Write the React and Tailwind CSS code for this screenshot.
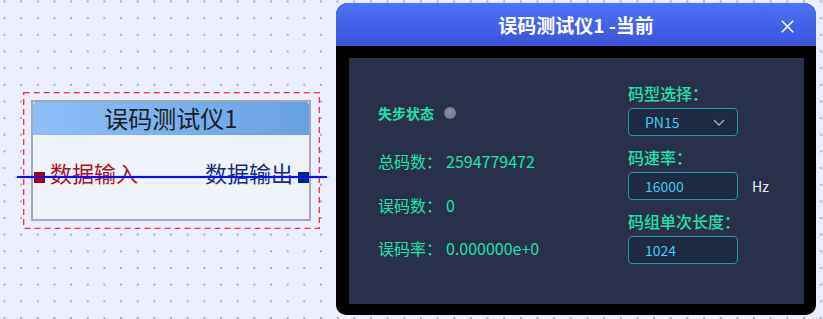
import React from 'react';

const FONT = { fontFamily: '"Noto Sans CJK SC", "Noto Sans", sans-serif' };

function Field({ children }) {
  return (
    <div className="w-[110px] h-[28px] mt-[5px] flex items-center pl-[16px] pr-[12px] rounded-[4px] border border-[#1b98a9] bg-[#1f2940] text-[14px] text-[#37cff0]">
      {children}
    </div>
  );
}

function BlockNode() {
  return (
    <div className="absolute left-[23px] top-[92px] w-[297px] h-[137px] p-[8px]">
      <svg className="absolute inset-0" width="297" height="137">
        <rect x="0.7" y="0.7" width="295.6" height="135.6" fill="none" stroke="#f0303f" strokeWidth="1.3" strokeDasharray="6 4" />
      </svg>
      <div className="relative w-[280px] h-[121px] border-2 border-[#a3a9b5] bg-[#eef3f9] flex flex-col">
        <div className="h-[33px] pb-[2px] rounded-t-[3px] bg-gradient-to-r from-[#8cbffa] to-[#68a1e3] flex items-center justify-center text-[24px] text-[#1e1e22] leading-none">
          误码测试仪1
        </div>
        <div className="flex-1 flex items-center justify-between pl-[1px]">
          <div className="flex items-center">
            <div className="w-[11px] h-[11px] bg-[#a3000f]" />
            <div className="ml-[5px] pb-[10px] text-[22px] leading-none text-[#ad1422]">数据输入</div>
          </div>
          <div className="flex items-center">
            <div className="pb-[10px] text-[22px] leading-none text-[#1c2b7d]">数据输出</div>
            <div className="ml-[5px] w-[11px] h-[11px] bg-[#00208c]" />
          </div>
        </div>
      </div>
      <svg className="absolute left-[-9px] top-[81px]" width="316" height="8">
        <path d="M0 4 L6 2.8 L310 2.8 L316 4 L310 5.2 L6 5.2 Z" fill="#6b6bff" opacity="0.6" />
        <line x1="3" y1="4" x2="313" y2="4" stroke="#0a0aff" strokeWidth="2" />
      </svg>
    </div>
  );
}

function Dialog() {
  return (
    <div className="absolute left-[336px] top-[3px] w-[480px] h-[312px] rounded-t-[12px] rounded-b-[10px] overflow-hidden bg-black flex flex-col">
      <div className="relative h-[43px] bg-gradient-to-b from-[#4b73fb] to-[#3954d8] flex items-center justify-center">
        <div className="text-white font-bold text-[19px] leading-none">误码测试仪1 -当前</div>
        <svg className="absolute right-[22px] top-[17px]" width="13" height="13" viewBox="0 0 13 13">
          <path d="M0.8 0.8 L12.2 12.2 M12.2 0.8 L0.8 12.2" stroke="#fff" strokeWidth="1.6" />
        </svg>
      </div>
      <div className="flex-1 pl-[13px] pr-[12px] pt-[12px] pb-[11px]">
        <div className="h-full bg-[#283149] flex">
          <div className="w-[279px] pl-[29px] flex flex-col text-[#1fe3a6]">
            <div className="mt-[43px] h-[24px] flex items-center">
              <span className="text-[14px] font-bold">失步状态</span>
              <div className="ml-[10px] w-[12px] h-[12px] rounded-full bg-[radial-gradient(circle_at_45%_40%,#9195a2,#676b7b)]" />
            </div>
            <div className="mt-[24px] h-[24px] flex items-center text-[16px]">
              <span>总码数：</span>
              <span className="ml-[4px]">2594779472</span>
            </div>
            <div className="mt-[20px] h-[24px] flex items-center text-[16px]">
              <span>误码数：</span>
              <span className="ml-[4px]">0</span>
            </div>
            <div className="mt-[19px] h-[24px] flex items-center text-[16px]">
              <span>误码率：</span>
              <span className="ml-[4px]">0.000000e+0</span>
            </div>
          </div>
          <div className="flex flex-col text-[16px] text-[#1fe3a6] font-medium">
            <div className="mt-[25px] h-[20px] flex items-center">码型选择：</div>
            <Field>
              <span className="flex-1 font-normal">PN15</span>
              <svg width="12" height="7" viewBox="0 0 12 7">
                <polyline points="1,1 6,6 11,1" fill="none" stroke="#a9b0bf" strokeWidth="1.3" />
              </svg>
            </Field>
            <div className="mt-[11px] h-[20px] flex items-center">码速率：</div>
            <div className="flex items-center">
              <Field><span className="font-normal">16000</span></Field>
              <span className="ml-[14px] mt-[5px] text-[14px] text-[#eceef4] font-normal">Hz</span>
            </div>
            <div className="mt-[11px] h-[20px] flex items-center">码组单次长度：</div>
            <Field><span className="font-normal">1024</span></Field>
          </div>
        </div>
      </div>
    </div>
  );
}

export default function App() {
  return (
    <div
      className="relative w-[823px] h-[319px] overflow-hidden bg-[#ebeffd] bg-[radial-gradient(circle_at_1px_1px,#a8acbd_0.9px,transparent_1.3px)] bg-[length:16.667px_16.667px] bg-[position:3.5px_0.5px]"
      style={FONT}
    >
      <BlockNode />
      <Dialog />
    </div>
  );
}
